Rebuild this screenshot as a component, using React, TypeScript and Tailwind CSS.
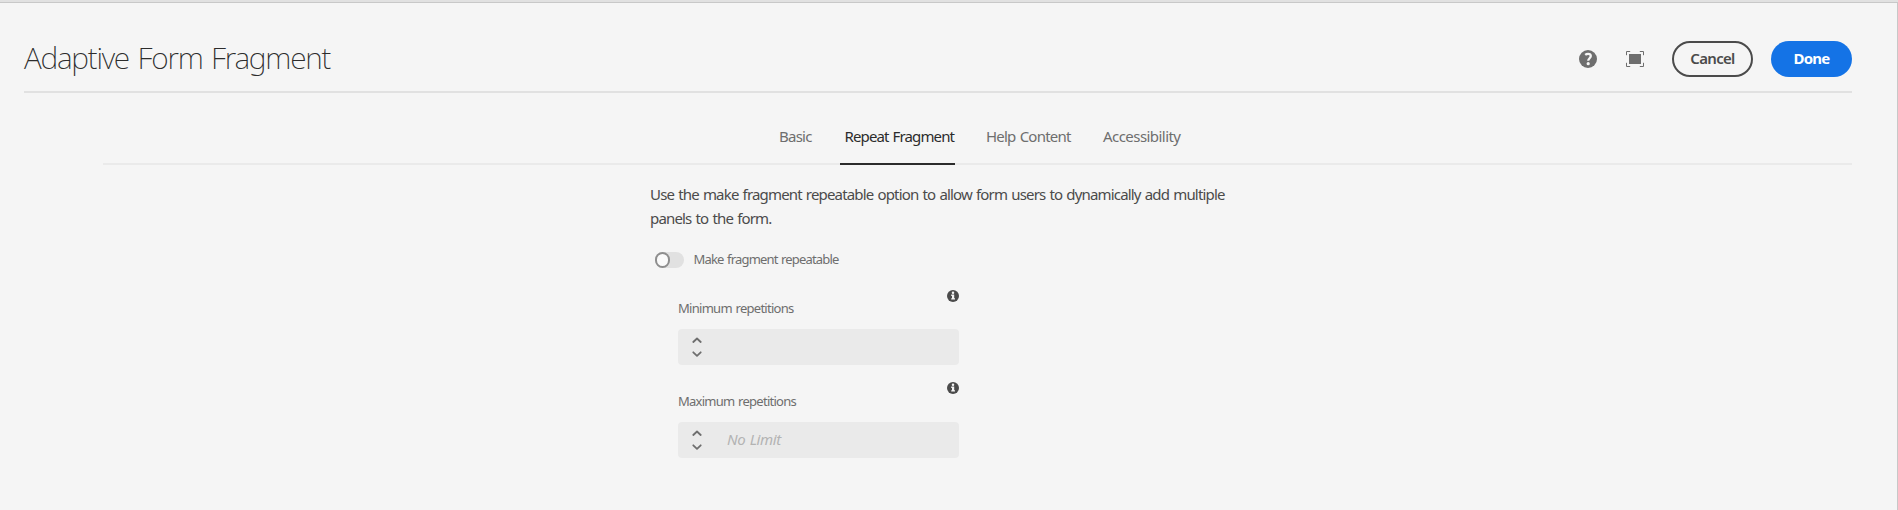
import type { ReactNode } from "react";

function HelpIcon() {
  return (
    <svg width="18" height="18" viewBox="0 0 18 18" className="shrink-0">
      <circle cx="9" cy="9" r="9" fill="#6e6e6e" />
      <path d="M6.2 4.9C7 4.2 8 3.8 9.1 3.8c1.7 0 2.7 1 2.7 2.3 0 2-2.6 2.3-2.6 4.7" fill="none" stroke="#f5f5f5" strokeWidth="2.3" />
      <circle cx="9.2" cy="13.7" r="1.6" fill="#f5f5f5" />
    </svg>
  );
}

function FullScreenIcon() {
  return (
    <svg width="18" height="16" viewBox="0 0 18 16" className="shrink-0">
      <rect x="3" y="3" width="12" height="10" fill="#6e6e6e" />
      <path d="M.5 4.2V.5h3.7M13.8.5h3.7v3.7M17.5 11.8v3.7h-3.7M4.2 15.5H.5v-3.7" fill="none" stroke="#6e6e6e" />
    </svg>
  );
}

function InfoIcon() {
  return (
    <svg width="12" height="12" viewBox="0 0 12 12" className="block">
      <circle cx="6" cy="6" r="6" fill="#4b4b4b" />
      <circle cx="6" cy="2.7" r="1.25" fill="#f5f5f5" />
      <path d="M4.2 4.6h3v3.6h.8v1.3H4.2V8.2H5V5.9h-.8z" fill="#f5f5f5" />
    </svg>
  );
}

function Stepper() {
  return (
    <svg width="10" height="20" viewBox="0 0 10 20" className="shrink-0" fill="none" stroke="#6e6e6e" strokeWidth="1.8" strokeLinecap="round" strokeLinejoin="round">
      <path d="M1.3 5 5 1.5 8.7 5M1.3 15.3 5 18.8 8.7 15.3" />
    </svg>
  );
}

function Field({ label, children }: { label: ReactNode; children?: ReactNode }) {
  return (
    <div className="w-[281px]">
      <div className="flex h-3 justify-end">
        <InfoIcon />
      </div>
      {label}
      <div className="flex h-9 items-center rounded bg-[#eaeaea] pl-[14px]">
        <Stepper />
        {children}
      </div>
    </div>
  );
}

export default function App() {
  return (
    <div className="h-[510px] w-[1898px] overflow-hidden bg-[#e1e1e1] pt-[2px] font-['Noto_Sans',sans-serif] text-[15px] [word-spacing:1px]">
      <div className="h-[508px] border-t border-r border-[#c8c8c8] bg-[#f5f5f5]">
        <header className="ml-6 flex h-[90px] w-[1828px] items-center border-b-2 border-[#e1e1e1] pt-6">
          <h1 className="pb-[3px] text-[30px] leading-10 font-extralight tracking-[-1.23px] text-[#2c2c2c] [word-spacing:2px]">Adaptive Form Fragment</h1>
          <div className="ml-auto flex items-center">
            <HelpIcon />
            <div className="ml-[29px]">
              <FullScreenIcon />
            </div>
            <button className="ml-7 flex h-9 w-[81px] items-center justify-center rounded-full border-2 border-[#4b4b4b] pb-px font-semibold tracking-[-0.7px] text-[#4b4b4b]">Cancel</button>
            <button className="ml-[18px] flex h-9 w-[81px] items-center justify-center rounded-full bg-[#1473e6] pb-px font-bold tracking-[-0.75px] text-white">Done</button>
          </div>
        </header>

        <nav className="ml-[103px] flex h-[72px] w-[1749px] border-b-2 border-[#eaeaea] pt-8 leading-[22px] whitespace-nowrap text-[#6e6e6e]">
          <div className="ml-[676px] w-[61px] tracking-[-0.75px]">Basic</div>
          <div className="h-10 w-[115px] border-b-2 border-[#2c2c2c] pl-[4.5px] tracking-[-0.87px] text-[#2c2c2c]">Repeat Fragment</div>
          <div className="ml-[31px] w-[117px] tracking-[-0.78px]">Help Content</div>
          <div className="tracking-[-0.55px]">Accessibility</div>
        </nav>

        <main className="ml-[649px] w-[590px]">
          <p className="pt-[17px] pl-px leading-6 tracking-[-0.83px] whitespace-nowrap text-[#4b4b4b]">
            Use the make fragment repeatable option to allow form users to dynamically add multiple
            <br />
            panels to the form.
          </p>
          <div className="mt-[22px] ml-[6px] flex h-4 items-center">
            <div className="h-4 w-[29px] rounded-full bg-[#e1e1e1]">
              <div className="h-4 w-[15px] rounded-full border-2 border-[#8e8e8e] bg-[#fafafa]" />
            </div>
            <span className="ml-[9.5px] pb-[2px] text-[13px] leading-[18px] tracking-[-0.83px] text-[#6e6e6e]">Make fragment repeatable</span>
          </div>
          <div className="mt-[22px] ml-[29px] flex flex-col gap-[17px]">
            <Field label={<div className="-mt-[3px] h-[30px] text-[13px] leading-[18px] tracking-[-0.72px] text-[#6e6e6e]">Minimum repetitions</div>} />
            <Field label={<div className="-mt-[2px] h-[30px] text-[13px] leading-[18px] tracking-[-0.74px] text-[#6e6e6e]">Maximum repetitions</div>}>
              <span className="ml-[25px] pb-[2px] tracking-[-0.4px] text-[#b3b3b3] italic">No Limit</span>
            </Field>
          </div>
        </main>
      </div>
    </div>
  );
}
